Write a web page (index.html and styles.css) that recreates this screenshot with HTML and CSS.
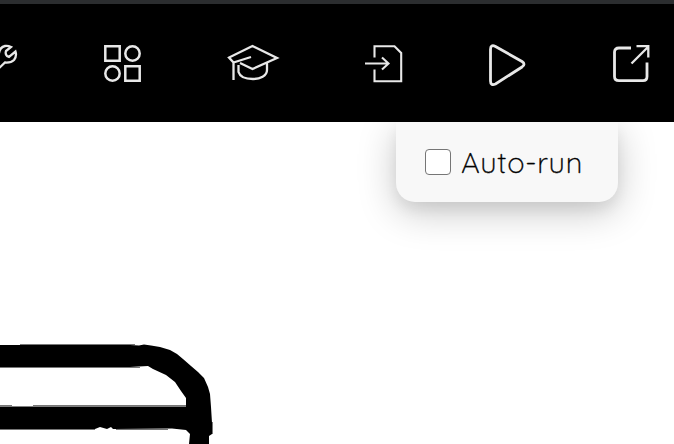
FILE: index.html
```
<!DOCTYPE html>
<html lang="en">
<head>
<meta charset="utf-8">
<title>Editor</title>
<link rel="stylesheet" href="styles.css">
</head>
<body>
<header class="toolbar">
  <svg class="icon" width="18" height="40" viewBox="0 0 18 40"><path d="M-10 21L-1 11Q0 5 5 4Q8 3.5 11 5L6 9Q5 12 7 14L9 15L15.5 9.5Q17 14 14 18Q11 21 5 20.5L-6 31" stroke-width="2.3"/></svg>
  <svg class="icon" width="38" height="40" viewBox="0 0 38 40"><g stroke-width="2.5"><path d="M1.3 4.3h14.4v14.4H1.3zM21.3 24.3h14.4v14.4H21.3z"/><circle cx="28.5" cy="11.5" r="7.2"/><circle cx="8.5" cy="31.5" r="7.2"/></g></svg>
  <svg class="icon" width="50" height="40" viewBox="0 0 50 40"><path d="M5.5 20.5L1 15.5L24.5 4L49 16L24.5 27L12 21M23 15L5.5 20.5V38M10.5 23V30C12 35 18 37 25 37S39 34 39 28V21" stroke-width="2.3"/></svg>
  <svg class="icon" width="38" height="40" viewBox="0 0 38 40"><path d="M10.5 15.5V4.2H30.5L37.2 11V39.2H10.5V27.5M1 21.5H24.5M18 15.5L24.5 21.5L18 27.5" stroke-width="2.1"/></svg>
  <svg class="icon" width="38" height="40" viewBox="0 0 38 40"><path d="M2.5 7.5Q2.5 2 7.5 4.5L34 19.5Q38 22 34 25L7.5 42Q2.5 44 2.5 39Z" stroke-width="2.8"/></svg>
  <svg class="icon" width="38" height="40" viewBox="0 0 38 40"><path d="M19 6H7Q2.5 6 2.5 10V34.5Q2.5 38.7 7 38.7H31Q35 38.7 35 34.5V20.5" stroke-width="2.8"/><path d="M19.5 21.5L36 5M24.5 4.2H36.3V15.5" stroke-width="2.3"/></svg>
</header>
<main class="workspace">
  <label class="run-menu"><input class="run-check" type="checkbox"><span class="run-text">Auto-run</span></label>
  <svg class="drawing" width="220" height="104" viewBox="0 340 220 104">
    <path d="M0 345H130L139 345.5L144 344.5L151 345.5L160 347L170 350L177 354L183 359L191 366L198 372L204 378L208 387L210 394L211 407L212 423V434L209 436V444H189L190 434L186 430L172 428.5L113 429L111 427L107 429L100 427L95 429H0V406.5H186V398L181 391L175 382L166 375L153 369L148 366L130 367H0Z"/>
    <path class="fringe" d="M20 344.5H135M0 367.5H140M0 405.5H12M33 405.5H186M0 429.5H95M116 429.5H168M212.5 422V434"/>
  </svg>
</main>
</body>
</html>
```
FILE: styles.css
```
body {
  margin: 0;
  width: 674px;
  height: 444px;
  overflow: hidden;
  background: #fff;
  font-family: Quicksand, Lato, sans-serif;
}

.toolbar {
  box-sizing: border-box;
  display: flex;
  gap: 86px;
  height: 122px;
  padding-top: 38px;
  border-top: 4px solid #2b2d2f;
  background: #000;
}

.icon {
  flex: none;
  overflow: visible;
  fill: none;
  stroke: #e8e8e8;
  stroke-width: 2;
}

.workspace {
  display: flex;
  flex-direction: column;
  justify-content: space-between;
  height: 322px;
  overflow: hidden;
}

.run-menu {
  box-sizing: border-box;
  display: flex;
  align-items: center;
  width: 222px;
  height: 80px;
  margin-left: 396px;
  padding-left: 29px;
  border-radius: 0 0 19px 19px;
  background: #f8f8f8;
  box-shadow: 0 10px 38px rgba(0, 0, 0, 0.22), 0 8px 14px rgba(0, 0, 0, 0.06);
}

.run-check {
  appearance: none;
  box-sizing: border-box;
  width: 26px;
  height: 26px;
  margin: 0 10px 0 0;
  border: 1px solid #767676;
  border-radius: 4px;
  background: #fff;
}

.run-text {
  color: #000;
  font-size: 29px;
  font-weight: 300;
  line-height: 36px;
  letter-spacing: 0.75px;
  -webkit-text-stroke: 0.35px #000;
}

.drawing {
  display: block;
}

.fringe {
  fill: none;
  stroke: #777;
  stroke-width: 1;
}
```
